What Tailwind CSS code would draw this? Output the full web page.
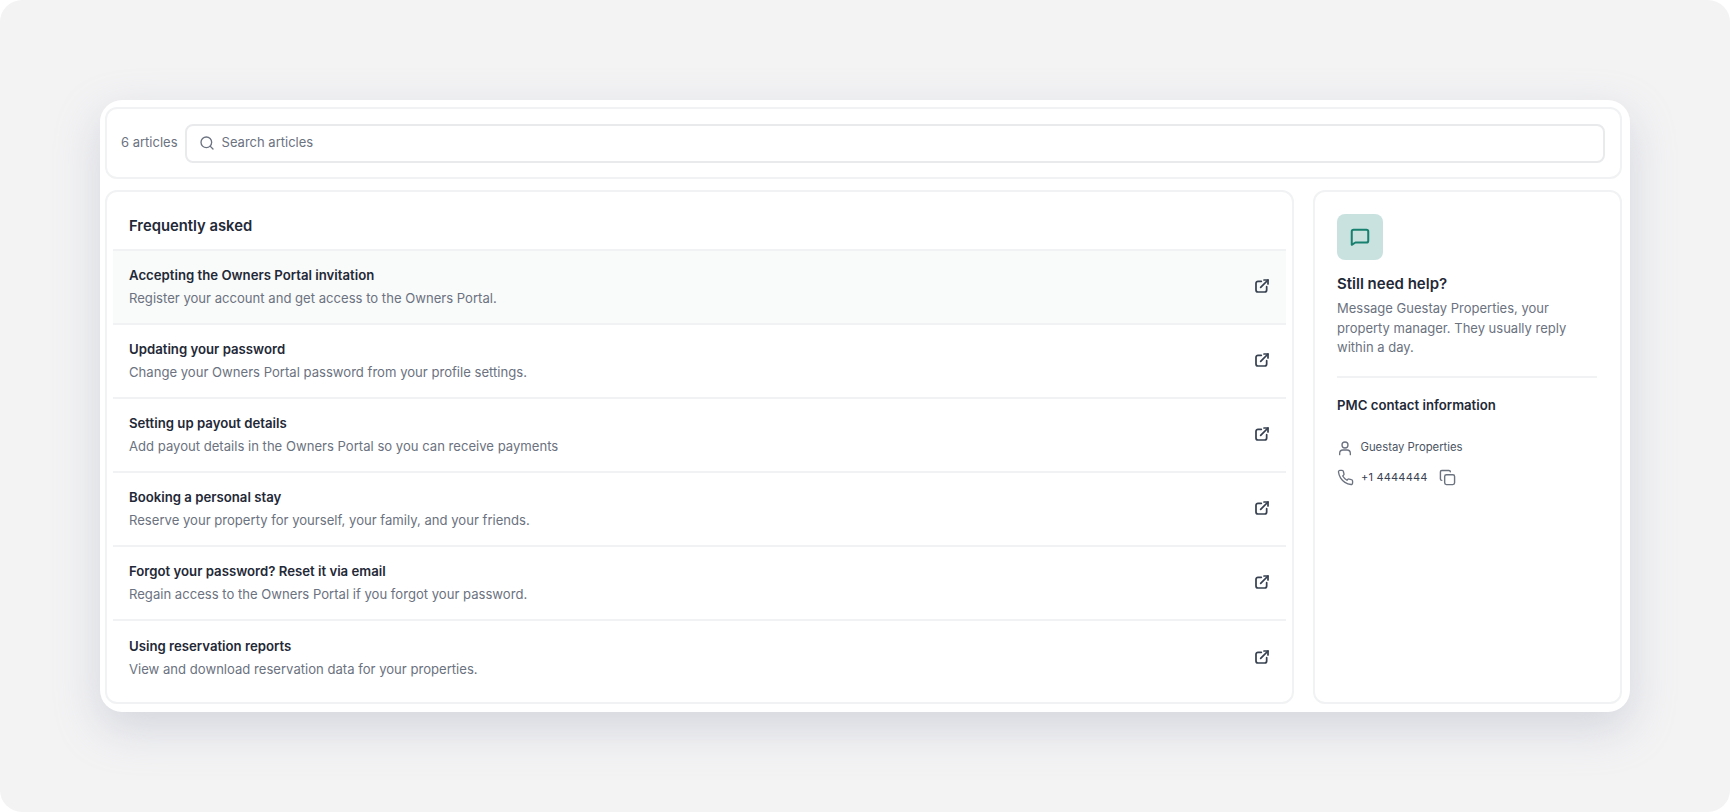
<!DOCTYPE html>
<html lang="en">
<head>
  <meta charset="UTF-8" />
  <title>Help articles</title>
  <script src="https://cdn.jsdelivr.net/npm/@tailwindcss/browser@4"></script>
</head>
<body class="bg-white font-['Inter',sans-serif] overflow-hidden">
  <div class="w-[1730px] h-[812px] rounded-[22px] bg-[#f3f3f4] pt-[100px] pl-[100px]">
    <div class="w-[1530px] h-[612px] rounded-[22px] bg-white pt-[7px] pl-[5px] pr-[8px] pb-[8px] flex flex-col gap-[11px] shadow-[0_16px_44px_rgba(170,174,190,0.42)]">

      <!-- Search -->
      <div class="h-[72px] rounded-[12px] border-2 border-[#f1f2f3] flex items-center pl-[14px] pr-[15px] gap-[7px]">
        <span class="text-[13px] text-[#6b7280] whitespace-nowrap">6 articles</span>
        <div class="flex-1 h-[39px] rounded-[8px] border-2 border-[#e9eaec] flex items-center pl-[12px] gap-[7px]">
          <svg class="w-[16px] h-[16px] text-[#6b7280]" viewBox="0 0 24 24" fill="none" stroke="currentColor" stroke-width="2" stroke-linecap="round" stroke-linejoin="round"><circle cx="11" cy="11" r="8"/><path d="m21 21-4.3-4.3"/></svg>
          <span class="text-[13px] text-[#6b7280]">Search articles</span>
        </div>
      </div>

      <div class="flex-1 flex gap-[19px]">
        <!-- Frequently asked -->
        <div class="w-[1189px] rounded-[12px] border-2 border-[#f1f2f3] px-[6px]">
          <h2 class="h-[57px] pl-[16px] pt-[11px] flex items-center text-[14.8px] font-semibold text-[#1f2937]">Frequently asked</h2>
          <div class="divide-y-2 divide-[#f1f2f3] border-t-2 border-[#f1f2f3]">
            <a class="h-[74px] pl-[16px] pr-[16px] pb-[2px] flex items-center justify-between bg-[#f9fafa]">
              <div>
                <p class="text-[13.2px] font-semibold text-[#1f2937] leading-[20px]">Accepting the Owners Portal invitation</p>
                <p class="text-[13.1px] text-[#6b7280] leading-[20px] mt-[3px]">Register your account and get access to the Owners Portal.</p>
              </div>
              <svg class="w-[16px] h-[16px] text-[#374151]" viewBox="0 0 24 24" fill="none" stroke="currentColor" stroke-width="2.6" stroke-linecap="round" stroke-linejoin="round"><path d="M11 5H6a3 3 0 0 0-3 3v10a3 3 0 0 0 3 3h10a3 3 0 0 0 3-3v-5"/><path d="M10 14 21 3"/><path d="M15 3h6v6"/></svg>
            </a>
            <a class="h-[74px] pl-[16px] pr-[16px] pb-[2px] flex items-center justify-between">
              <div>
                <p class="text-[13.2px] font-semibold text-[#1f2937] leading-[20px]">Updating your password</p>
                <p class="text-[13.1px] text-[#6b7280] leading-[20px] mt-[3px]">Change your Owners Portal password from your profile settings.</p>
              </div>
              <svg class="w-[16px] h-[16px] text-[#374151]" viewBox="0 0 24 24" fill="none" stroke="currentColor" stroke-width="2.6" stroke-linecap="round" stroke-linejoin="round"><path d="M11 5H6a3 3 0 0 0-3 3v10a3 3 0 0 0 3 3h10a3 3 0 0 0 3-3v-5"/><path d="M10 14 21 3"/><path d="M15 3h6v6"/></svg>
            </a>
            <a class="h-[74px] pl-[16px] pr-[16px] pb-[2px] flex items-center justify-between">
              <div>
                <p class="text-[13.2px] font-semibold text-[#1f2937] leading-[20px]">Setting up payout details</p>
                <p class="text-[13.1px] text-[#6b7280] leading-[20px] mt-[3px]">Add payout details in the Owners Portal so you can receive payments</p>
              </div>
              <svg class="w-[16px] h-[16px] text-[#374151]" viewBox="0 0 24 24" fill="none" stroke="currentColor" stroke-width="2.6" stroke-linecap="round" stroke-linejoin="round"><path d="M11 5H6a3 3 0 0 0-3 3v10a3 3 0 0 0 3 3h10a3 3 0 0 0 3-3v-5"/><path d="M10 14 21 3"/><path d="M15 3h6v6"/></svg>
            </a>
            <a class="h-[74px] pl-[16px] pr-[16px] pb-[2px] flex items-center justify-between">
              <div>
                <p class="text-[13.2px] font-semibold text-[#1f2937] leading-[20px]">Booking a personal stay</p>
                <p class="text-[13.1px] text-[#6b7280] leading-[20px] mt-[3px]">Reserve your property for yourself, your family, and your friends.</p>
              </div>
              <svg class="w-[16px] h-[16px] text-[#374151]" viewBox="0 0 24 24" fill="none" stroke="currentColor" stroke-width="2.6" stroke-linecap="round" stroke-linejoin="round"><path d="M11 5H6a3 3 0 0 0-3 3v10a3 3 0 0 0 3 3h10a3 3 0 0 0 3-3v-5"/><path d="M10 14 21 3"/><path d="M15 3h6v6"/></svg>
            </a>
            <a class="h-[74px] pl-[16px] pr-[16px] pb-[2px] flex items-center justify-between">
              <div>
                <p class="text-[13.2px] font-semibold text-[#1f2937] leading-[20px]">Forgot your password? Reset it via email</p>
                <p class="text-[13.1px] text-[#6b7280] leading-[20px] mt-[3px]">Regain access to the Owners Portal if you forgot your password.</p>
              </div>
              <svg class="w-[16px] h-[16px] text-[#374151]" viewBox="0 0 24 24" fill="none" stroke="currentColor" stroke-width="2.6" stroke-linecap="round" stroke-linejoin="round"><path d="M11 5H6a3 3 0 0 0-3 3v10a3 3 0 0 0 3 3h10a3 3 0 0 0 3-3v-5"/><path d="M10 14 21 3"/><path d="M15 3h6v6"/></svg>
            </a>
            <a class="h-[74px] pl-[16px] pr-[16px] pb-[2px] flex items-center justify-between">
              <div>
                <p class="text-[13.2px] font-semibold text-[#1f2937] leading-[20px]">Using reservation reports</p>
                <p class="text-[13.1px] text-[#6b7280] leading-[20px] mt-[3px]">View and download reservation data for your properties.</p>
              </div>
              <svg class="w-[16px] h-[16px] text-[#374151]" viewBox="0 0 24 24" fill="none" stroke="currentColor" stroke-width="2.6" stroke-linecap="round" stroke-linejoin="round"><path d="M11 5H6a3 3 0 0 0-3 3v10a3 3 0 0 0 3 3h10a3 3 0 0 0 3-3v-5"/><path d="M10 14 21 3"/><path d="M15 3h6v6"/></svg>
            </a>
          </div>
        </div>

        <!-- Still need help -->
        <div class="flex-1 rounded-[12px] border-2 border-[#f1f2f3] pt-[22px] pl-[22px] pr-[23px]">
          <div class="w-[46px] h-[46px] rounded-[8px] bg-[#c9e2df] flex items-center justify-center">
            <svg class="w-[22px] h-[22px] text-[#17806f]" viewBox="0 0 24 24" fill="none" stroke="currentColor" stroke-width="2.2" stroke-linecap="round" stroke-linejoin="round"><path d="M3 20.5V6a2 2 0 0 1 2-2h14a2 2 0 0 1 2 2v10a2 2 0 0 1-2 2H7z"/></svg>
          </div>
          <h3 class="mt-[12px] text-[15px] font-semibold text-[#1f2937] leading-[24px]">Still need help?</h3>
          <p class="mt-[3px] text-[13px] text-[#6b7280] leading-[19.5px]">Message Guestay Properties, your property manager. They usually reply within a day.</p>
          <div class="mt-[18px] border-t-2 border-[#f1f2f3]"></div>
          <h4 class="mt-[17px] text-[13.2px] font-semibold text-[#1f2937] leading-[20px]">PMC contact information</h4>
          <div class="mt-[23px] flex items-center gap-[7.5px] h-[20px]">
            <svg class="w-[16px] h-[16px] text-[#6b7280]" viewBox="0 0 24 24" fill="none" stroke="currentColor" stroke-width="2" stroke-linecap="round" stroke-linejoin="round"><circle cx="12" cy="7.5" r="4.5"/><path d="M4 22v-2a5 5 0 0 1 5-5h6a5 5 0 0 1 5 5v2"/></svg>
            <span class="text-[11.3px] text-[#4b5563]">Guestay Properties</span>
          </div>
          <div class="mt-[10px] flex items-center h-[20px]">
            <svg class="w-[17px] h-[17px] text-[#6b7280] mr-[7px]" viewBox="0 0 24 24" fill="none" stroke="currentColor" stroke-width="1.9" stroke-linecap="round" stroke-linejoin="round"><path d="M22 16.9v3a2 2 0 0 1-2.2 2 19.8 19.8 0 0 1-8.6-3.1 19.5 19.5 0 0 1-6-6A19.8 19.8 0 0 1 2.1 4.2 2 2 0 0 1 4.1 2h3a2 2 0 0 1 2 1.7c.1 1 .4 1.9.7 2.8a2 2 0 0 1-.5 2.1L8.1 9.9a16 16 0 0 0 6 6l1.3-1.3a2 2 0 0 1 2.1-.4c.9.3 1.8.5 2.8.7a2 2 0 0 1 1.7 2z"/></svg>
            <span class="text-[11px] text-[#374151] tracking-[0.2px]">+1 4444444</span>
            <svg class="w-[17px] h-[17px] text-[#6b7280] ml-[11px]" viewBox="0 0 24 24" fill="none" stroke="currentColor" stroke-width="2" stroke-linecap="round" stroke-linejoin="round"><rect x="8" y="8" width="14" height="14" rx="2.5"/><path d="M4 16a2 2 0 0 1-2-2V4a2 2 0 0 1 2-2h10a2 2 0 0 1 2 2"/></svg>
          </div>
        </div>
      </div>
    </div>
  </div>
</body>
</html>
